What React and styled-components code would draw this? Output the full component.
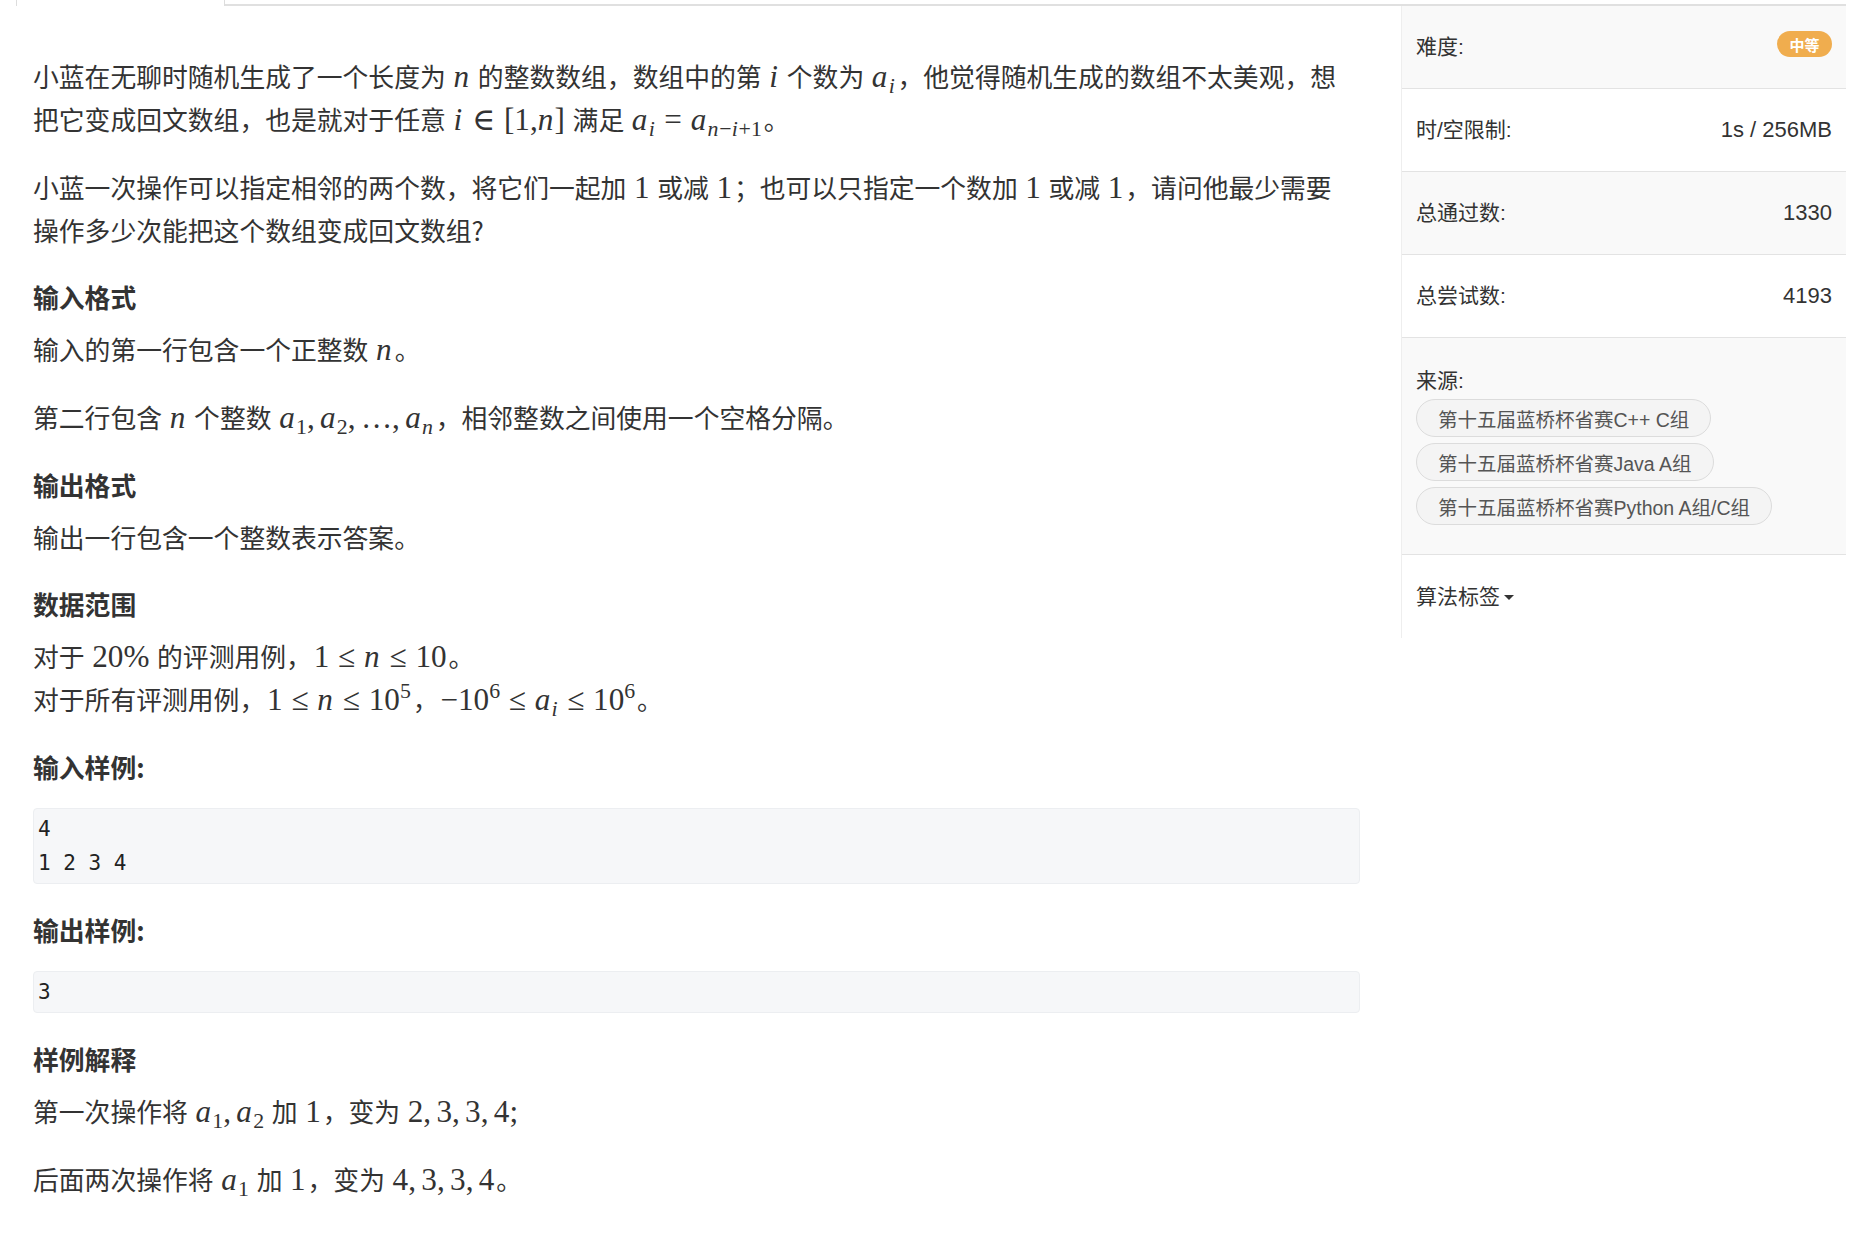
import React from "react";
import styled, { createGlobalStyle } from "styled-components";

const GlobalStyle = createGlobalStyle`
  html, body {
    margin: 0;
    padding: 0;
    background: #fff;
  }
  body {
    font-family: "Noto Sans CJK SC", "Noto Sans", sans-serif;
    color: #333;
  }
`;

const Page = styled.div`
  width: 1862px;
  padding: 0 16px;
  box-sizing: border-box;
`;

const TabBar = styled.div`
  display: flex;
  height: 6px;
`;

const ActiveTab = styled.div`
  width: 207px;
  border-left: 1px solid #ddd;
  border-right: 1px solid #ddd;
`;

const TabLine = styled.div`
  flex: 1;
  border-bottom: 2px solid #e0e0e0;
`;

const Body = styled.div`
  display: flex;
  align-items: flex-start;
`;

const Main = styled.div`
  width: 1327px;
  padding: 49px 0 0 17px;
`;

const P = styled.p`
  max-width: 1315px;
  margin: 0 0 25px;
  font-size: 25.8px;
  line-height: 42px;
`;

const Heading = styled.h3`
  margin: 0 0 10px;
  font-size: 25.8px;
  line-height: 42px;
  font-weight: bold;
`;

const Pre = styled.pre`
  margin: 20px 0 25px;
  padding: 3px 4px;
  background: #f6f7f9;
  border: 1px solid #eceef1;
  border-radius: 4px;
  font-family: "DejaVu Sans Mono", "Liberation Mono", monospace;
  font-size: 21px;
  line-height: 34px;
  color: #222;
`;

/* inline math, KaTeX-ish */
const M = styled.span`
  padding: 0 0.06em;
  font-family: "Liberation Serif", "DejaVu Serif", serif;
  font-size: 1.21em;
  white-space: nowrap;
`;

const I = styled.i`
  font-style: italic;
  padding-right: 0.04em;
`;

const Sub = styled.sub`
  font-size: 0.7em;
  vertical-align: -0.28em;
  line-height: 0;
`;

const Sup = styled.sup`
  font-size: 0.7em;
  vertical-align: 0.55em;
  line-height: 0;
`;

const Rel = styled.span`
  margin: 0 0.28em;
`;

const Comma = styled.span`
  margin-right: 0.17em;
`;

const Sidebar = styled.aside`
  margin-left: auto;
  width: 445px;
  border-left: 1px solid #eee;
  box-sizing: border-box;
  font-family: "Liberation Sans", "Noto Sans CJK SC", sans-serif;
`;

const Row = styled.div`
  display: flex;
  justify-content: space-between;
  height: ${(p) => (p.$tall ? "auto" : "83px")};
  padding: ${(p) => (p.$tall ? "28px 14px 29px" : "0 14px")};
  box-sizing: border-box;
  flex-direction: ${(p) => (p.$tall ? "column" : "row")};
  align-items: ${(p) => (p.$tall ? "flex-start" : "center")};
  background: ${(p) => (p.$shade ? "#f9f9f9" : "#fff")};
  border-bottom: ${(p) => (p.$last ? "none" : "1px solid #e3e3e3")};
`;

const Label = styled.span`
  font-size: 21px;
  line-height: 30px;
  color: #333;
`;

const Value = styled.span`
  font-size: 22px;
  color: #333;
`;

const Badge = styled.span`
  display: inline-flex;
  align-items: center;
  justify-content: center;
  width: 55px;
  height: 26px;
  margin-top: -6px;
  border-radius: 13px;
  background: #f0ad4e;
  color: #fff;
  font-size: 15px;
  font-weight: bold;
  font-family: "Noto Sans CJK SC", sans-serif;
`;

const TagList = styled.div`
  display: flex;
  flex-direction: column;
  align-items: flex-start;
  gap: 6px;
  margin-top: 3px;
`;

const Tag = styled.span`
  display: inline-flex;
  align-items: center;
  height: 38px;
  padding: 0 21px;
  box-sizing: border-box;
  border: 1px solid #dcdcdc;
  border-radius: 19px;
  background: #f4f4f4;
  color: #555;
  font-size: 19.5px;
`;

const Caret = styled.span`
  display: inline-block;
  width: 0;
  height: 0;
  margin-left: 4px;
  vertical-align: middle;
  border-left: 5px solid transparent;
  border-right: 5px solid transparent;
  border-top: 5px solid #333;
`;

const sources = [
  "第十五届蓝桥杯省赛C++ C组",
  "第十五届蓝桥杯省赛Java A组",
  "第十五届蓝桥杯省赛Python A组/C组",
];

const App = () => (
  <Page>
    <GlobalStyle />
    <TabBar>
      <ActiveTab />
      <TabLine />
    </TabBar>
    <Body>
      <Main>
        <P>
          小蓝在无聊时随机生成了一个长度为 <M><I>n</I></M> 的整数数组，数组中的第 <M><I>i</I></M> 个数为{" "}
          <M><I>a</I><Sub><I>i</I></Sub></M>，他觉得随机生成的数组不太美观，想把它变成回文数组，也是就对于任意{" "}
          <M>
            <I>i</I><Rel>∈</Rel>[1,<I>n</I>]
          </M>{" "}
          满足{" "}
          <M>
            <I>a</I><Sub><I>i</I></Sub><Rel>=</Rel><I>a</I>
            <Sub><I>n</I>−<I>i</I>+1</Sub>
          </M>
          。
        </P>
        <P>
          小蓝一次操作可以指定相邻的两个数，将它们一起加 <M>1</M> 或减 <M>1</M>；也可以只指定一个数加 <M>1</M> 或减{" "}
          <M>1</M>，请问他最少需要操作多少次能把这个数组变成回文数组?
        </P>

        <Heading>输入格式</Heading>
        <P>
          输入的第一行包含一个正整数 <M><I>n</I></M>。
        </P>
        <P>
          第二行包含 <M><I>n</I></M> 个整数{" "}
          <M>
            <I>a</I><Sub>1</Sub><Comma>,</Comma><I>a</I><Sub>2</Sub><Comma>,</Comma>…<Comma>,</Comma><I>a</I>
            <Sub><I>n</I></Sub>
          </M>
          ，相邻整数之间使用一个空格分隔。
        </P>

        <Heading>输出格式</Heading>
        <P>输出一行包含一个整数表示答案。</P>

        <Heading>数据范围</Heading>
        <P>
          对于 <M>20%</M> 的评测用例，
          <M>
            1<Rel>≤</Rel><I>n</I><Rel>≤</Rel>10
          </M>
          。
          <br />
          对于所有评测用例，
          <M>
            1<Rel>≤</Rel><I>n</I><Rel>≤</Rel>10<Sup>5</Sup>
          </M>
          ，
          <M>
            −10<Sup>6</Sup><Rel>≤</Rel><I>a</I><Sub><I>i</I></Sub><Rel>≤</Rel>10<Sup>6</Sup>
          </M>
          。
        </P>

        <Heading>输入样例:</Heading>
        <Pre>{"4\n1 2 3 4"}</Pre>

        <Heading>输出样例:</Heading>
        <Pre>3</Pre>

        <Heading>样例解释</Heading>
        <P>
          第一次操作将{" "}
          <M>
            <I>a</I><Sub>1</Sub><Comma>,</Comma><I>a</I><Sub>2</Sub>
          </M>{" "}
          加 <M>1</M>，变为{" "}
          <M>
            2<Comma>,</Comma>3<Comma>,</Comma>3<Comma>,</Comma>4;
          </M>
        </P>
        <P>
          后面两次操作将{" "}
          <M>
            <I>a</I><Sub>1</Sub>
          </M>{" "}
          加 <M>1</M>，变为{" "}
          <M>
            4<Comma>,</Comma>3<Comma>,</Comma>3<Comma>,</Comma>4
          </M>
          。
        </P>
      </Main>

      <Sidebar>
        <Row $shade>
          <Label>难度:</Label>
          <Badge>中等</Badge>
        </Row>
        <Row>
          <Label>时/空限制:</Label>
          <Value>1s / 256MB</Value>
        </Row>
        <Row $shade>
          <Label>总通过数:</Label>
          <Value>1330</Value>
        </Row>
        <Row>
          <Label>总尝试数:</Label>
          <Value>4193</Value>
        </Row>
        <Row $shade $tall>
          <Label>来源:</Label>
          <TagList>
            {sources.map((s) => (
              <Tag key={s}>{s}</Tag>
            ))}
          </TagList>
        </Row>
        <Row $last>
          <Label>
            算法标签
            <Caret />
          </Label>
        </Row>
      </Sidebar>
    </Body>
  </Page>
);

export default App;
